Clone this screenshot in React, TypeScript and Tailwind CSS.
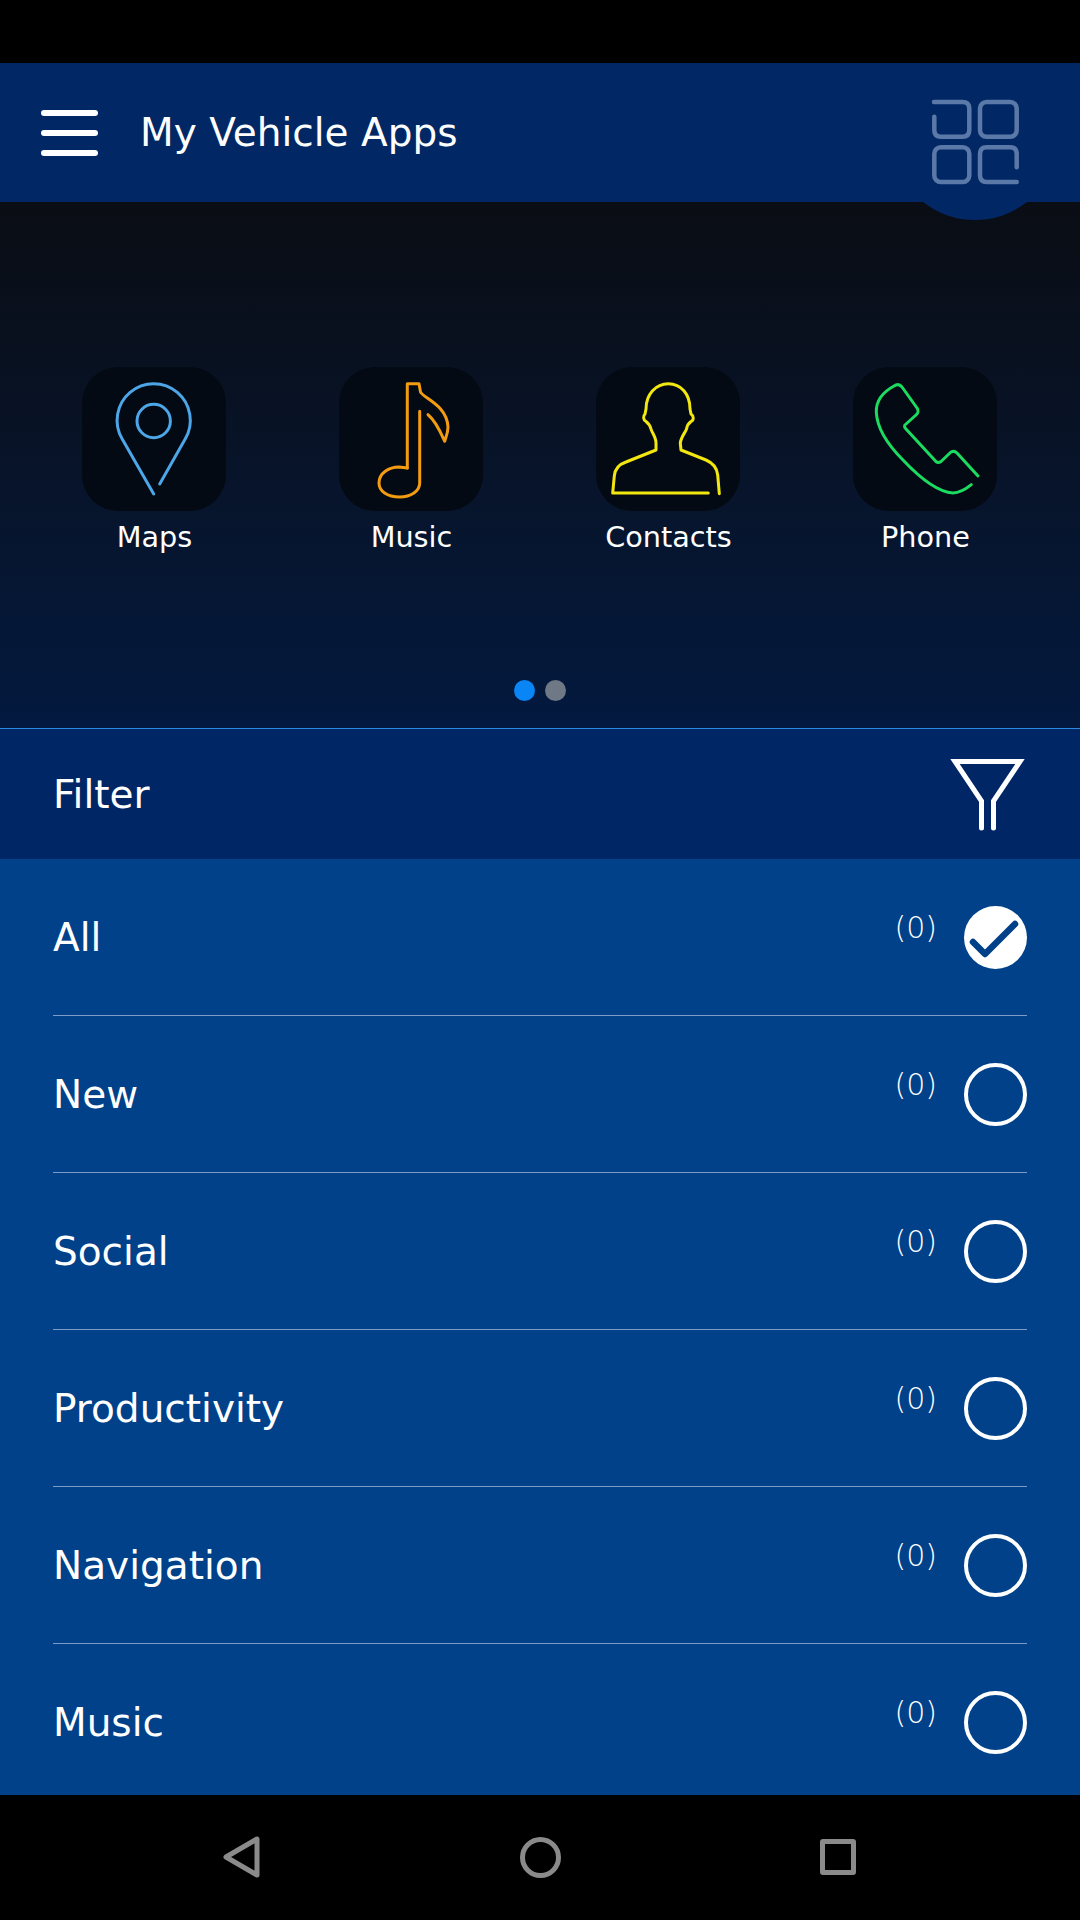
import React from "react";

const rows = ["All", "New", "Social", "Productivity", "Navigation", "Music"];

const apps = [
  {
    label: "Maps",
    color: "#4da6e8",
    icon: (
      <>
        <circle cx="71.7" cy="54" r="16.7" />
        <path d="M71.7 127 L40.2 72 A36.6 36.6 0 1 1 103.2 72 L77.7 117" />
      </>
    ),
  },
  {
    label: "Music",
    color: "#f39c12",
    icon: (
      <>
        <path d="M68.3 101 L68.3 16.7 H80 L81.5 25 C84 31 108 38 109 60 C109 66 107 70 105.7 74.3 C102 66 97 54 89 47.7" />
        <path d="M80.7 44.3 V116 C80.7 124 72 130 60.7 130 C48 130 40 124 40 116 C40 106 50 100 60 100 L68.3 101" />
      </>
    ),
  },
  {
    label: "Contacts",
    color: "#f2e70f",
    icon: (
      <path d="M112.3 126 H16.7 L18.3 109 C19 101 24 97 30 95 L60 83 V76 C60 70 56 66 55 62 C54 58 52 56 50 54.5 C47 53 47 49 49 47 L50 42 C50 27 60 16.7 72.3 16.7 C85 16.7 94 27 94 42 L95 47 C98 49 98 53 95 54.5 C93 56 91 58 90.5 62 C89 66 85 70 84.3 76 L85 83 L110 93 C117 96 121 101 121.7 108 L123.3 126.7" />
    ),
  },
  {
    label: "Phone",
    color: "#1bdc60",
    icon: (
      <path d="M125 109 L104 86 C102 84 100 84 98 85 L88 94.5 C86 96 84 96 82.5 94 L53 62 C51 60 51 58 53 57 L63 48 C65.5 46 65.5 43 64 41 L49 20 C47 17.5 44 17 41 19 C30 25 23 33 23.3 45 C24 62 36 79 50 93 C66 110 84 125 100 126 C107 126 113 122 118.3 117.7" />
    ),
  },
];

const Row: React.FC<{ name: string; checked: boolean; last: boolean }> = ({ name, checked, last }) => (
  <div className={last ? "h-[151px] relative" : "h-[157px] relative border-b border-[#7d9bc4]"}>
    <div className="flex items-center justify-between h-[156px]">
      <span className="text-[39px] text-white pt-[3px]">{name}</span>
      <div className="flex items-center gap-[27px]">
        <span className="text-[30px] font-extralight text-white -mt-[20px]">(0)</span>
        {checked ? (
          <div className="w-[63px] h-[63px] rounded-full bg-white flex items-center justify-center">
            <svg width="63" height="63" viewBox="0 0 63 63" fill="none">
              <path d="M9 36 L21 48 L51 18" stroke="#00418a" strokeWidth="6.5" strokeLinecap="round" strokeLinejoin="round" />
            </svg>
          </div>
        ) : (
          <div className="w-[63px] h-[63px] rounded-full border-[4px] border-white" />
        )}
      </div>
    </div>
  </div>
);

export default function App() {
  return (
    <div className="w-[1080px] h-[1920px] flex flex-col bg-black font-['DejaVu_Sans',sans-serif] overflow-hidden">
      <div className="h-[63px] shrink-0 bg-black" />

      <header className="h-[139px] shrink-0 bg-[#012864] flex items-center relative z-10">
        <div className="ml-[41px] w-[57px] flex flex-col gap-[14px]">
          <div className="h-[6px] rounded-[3px] bg-white" />
          <div className="h-[6px] rounded-[3px] bg-white" />
          <div className="h-[6px] rounded-[3px] bg-white" />
        </div>
        <h1 className="ml-[42px] pt-[2px] text-[39px] font-normal text-white">My Vehicle Apps</h1>
        <svg className="absolute left-[923px] top-[139px]" width="104" height="19" viewBox="0 0 104 19" fill="#012864">
          <path d="M0 0 A84 84 0 0 0 104 0 Z" />
        </svg>
        <svg className="absolute left-[930px] top-[35px]" width="90" height="88" viewBox="0 0 90 88" fill="none" stroke="#5b79a8" strokeWidth="4.5" strokeLinecap="round">
          <path d="M4.3 18.7 V32 Q4.3 38.7 11 38.7 H32.5 Q39.3 38.7 39.3 32 V10.7 Q39.3 4 32.5 4 H4" />
          <rect x="50" y="4" width="36.7" height="34.7" rx="6.5" />
          <rect x="4.3" y="49.3" width="35" height="34.7" rx="6.5" />
          <path d="M86.7 69.3 V56 Q86.7 49.3 80 49.3 H56.7 Q50 49.3 50 56 V77.3 Q50 84 56.7 84 H86.7" />
        </svg>
      </header>

      <section className="h-[526px] shrink-0 bg-gradient-to-b from-[#0a0d14] to-[#03193f] flex flex-col items-center">
        <div className="w-[1028px] mt-[165px] ml-[25px] self-start grid grid-cols-4">
          {apps.map((app) => (
            <div key={app.label} className="flex flex-col items-center">
              <div className="w-[144px] h-[144px] rounded-[36px] bg-[#040a14]">
                <svg width="144" height="144" viewBox="0 0 144 144" fill="none" stroke={app.color} strokeWidth="3" strokeLinecap="round" strokeLinejoin="round">
                  {app.icon}
                </svg>
              </div>
              <span className="mt-[9px] pl-[2px] text-[28.7px] leading-[34px] text-white">{app.label}</span>
            </div>
          ))}
        </div>
        <div className="mt-[126px] flex gap-[10px]">
          <div className="w-[21px] h-[21px] rounded-full bg-[#0a85f5]" />
          <div className="w-[21px] h-[21px] rounded-full bg-[#6f7885]" />
        </div>
      </section>

      <div className="h-px shrink-0 bg-[#2a8ae0]" />

      <div className="h-[130px] shrink-0 bg-[#012666] flex items-center justify-between pl-[53px] pr-[57px]">
        <span className="text-[39px] text-white pt-[2px]">Filter</span>
        <svg className="overflow-visible" width="71" height="71" viewBox="0 0 71 71" fill="none" stroke="white" strokeWidth="5" strokeLinecap="round" strokeLinejoin="miter">
          <path d="M29.5 69 V42 L3 2.5 H68 L41.5 42 V69" />
        </svg>
      </div>

      <div className="flex-1 bg-[#00418a] px-[53px]">
        {rows.map((name, i) => (
          <Row key={name} name={name} checked={i === 0} last={i === rows.length - 1} />
        ))}
      </div>

      <nav className="h-[126px] shrink-0 bg-black relative">
        <svg className="absolute left-[222px] top-[40px]" width="40" height="44" viewBox="0 0 40 44" fill="none" stroke="#8a8a8a" strokeWidth="5" strokeLinejoin="round">
          <path d="M35 4 V40 L4 22 Z" />
        </svg>
        <div className="absolute left-[520px] top-[42px] w-[41px] h-[41px] rounded-full border-[5px] border-[#8a8a8a]" />
        <div className="absolute left-[820px] top-[44px] w-[36px] h-[36px] rounded-[3px] border-[5px] border-[#8a8a8a]" />
      </nav>
    </div>
  );
}
